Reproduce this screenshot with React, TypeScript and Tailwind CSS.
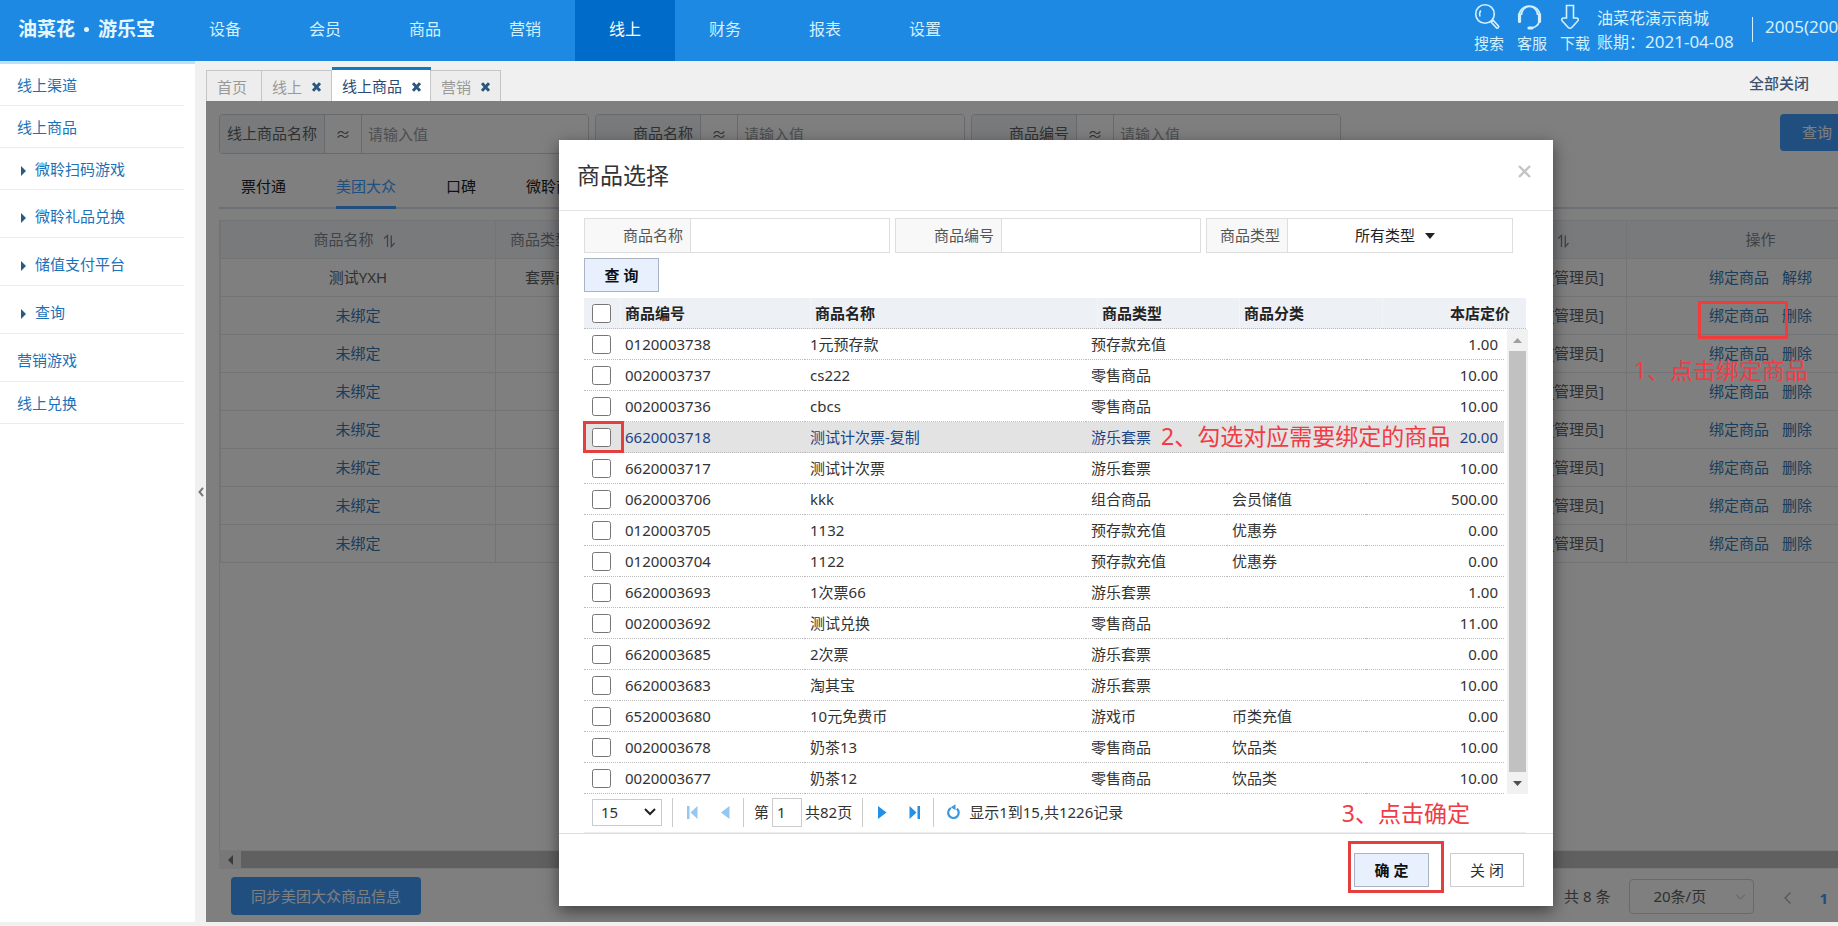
import { useState } from "react";
import type { ReactNode } from "react";

const NAV = ["设备", "会员", "商品", "营销", "线上", "财务", "报表", "设置"];

const SIDE = [
  { text: "线上渠道" },
  { text: "线上商品" },
  { text: "微聆扫码游戏", sub: true },
  { text: "微聆礼品兑换", sub: true, tall: true },
  { text: "储值支付平台", sub: true, tall: true },
  { text: "查询", sub: true, tall: true },
  { text: "营销游戏", tall: true },
  { text: "线上兑换" },
];

const TABS = [
  { text: "首页" },
  { text: "线上", closable: true },
  { text: "线上商品", closable: true, active: true },
  { text: "营销", closable: true },
];

const GOODS = [
  ["0120003738", "1元预存款", "预存款充值", "", "1.00"],
  ["0020003737", "cs222", "零售商品", "", "10.00"],
  ["0020003736", "cbcs", "零售商品", "", "10.00"],
  ["6620003718", "测试计次票-复制", "游乐套票", "", "20.00"],
  ["6620003717", "测试计次票", "游乐套票", "", "10.00"],
  ["0620003706", "kkk", "组合商品", "会员储值", "500.00"],
  ["0120003705", "1132", "预存款充值", "优惠券", "0.00"],
  ["0120003704", "1122", "预存款充值", "优惠券", "0.00"],
  ["6620003693", "1次票66", "游乐套票", "", "1.00"],
  ["0020003692", "测试兑换", "零售商品", "", "11.00"],
  ["6620003685", "2次票", "游乐套票", "", "0.00"],
  ["6620003683", "淘其宝", "游乐套票", "", "10.00"],
  ["6520003680", "10元免费币", "游戏币", "币类充值", "0.00"],
  ["0020003678", "奶茶13", "零售商品", "饮品类", "10.00"],
  ["0020003677", "奶茶12", "零售商品", "饮品类", "10.00"],
];

function SortIcon() {
  return (
    <svg width="13" height="16" viewBox="0 0 13 16" fill="none" stroke="currentColor" className="shrink-0">
      <path d="M1 6.500 4.500 3.500V15" strokeWidth="1.300" />
      <path d="M8.300 3.500V14.600L11.500 11" strokeWidth="1.300" />
    </svg>
  );
}

function CloseMark() {
  return (
    <svg width="9" height="10" viewBox="0 0 9 10" stroke="#2b577e" strokeWidth="3" className="shrink-0">
      <path d="M1 1.2 8 8.8M8 1.2 1 8.8" />
    </svg>
  );
}

function Tool({ label, children }: { label: string; children: ReactNode }) {
  return (
    <a href="#" className="flex w-[30px] flex-col items-center gap-px text-[15px] leading-5">
      <svg width="30" height="30" viewBox="0 0 30 30" fill="none" stroke="currentColor" strokeWidth="1.6">
        {children}
      </svg>
      {label}
    </a>
  );
}

function Header() {
  return (
    <header className="flex h-[61px] shrink-0 overflow-hidden bg-[#1e89e3] text-[#d3f0ff]">
      <div className="flex w-[175px] shrink-0 items-center gap-[9px] pb-[3px] pl-[18px] text-[19px] font-bold whitespace-nowrap text-[#e4f7ff]">
        <span>油菜花</span>
        <span className="h-[5px] w-[5px] rounded-full bg-[#e4f7ff]" />
        <span>游乐宝</span>
      </div>
      <nav className="flex">
        {NAV.map((n) => (
          <a
            key={n}
            href="#"
            className={
              n === "线上"
                ? "flex w-[100px] items-center justify-center bg-[#006bc9] pb-[3px] text-base text-white"
                : "flex w-[100px] items-center justify-center pb-[3px] text-base"
            }
          >
            {n}
          </a>
        ))}
      </nav>
      <div className="ml-auto flex shrink-0">
        <div className="flex gap-[13px] pt-[2px]">
          <Tool label="搜索">
            <circle cx="11" cy="12" r="9.300" />
            <path d="M6.200 14.500a6 6 0 0 1 .6-6" />
            <path d="m17.300 20.200 2-1.800 5.200 5.600c.8 1-.9 2.800-2 1.900z" />
          </Tool>
          <Tool label="客服">
            <path d="M2 14a10.500 10 0 0 1 21 0" />
            <path d="M4.500 13a8 8.500 0 0 1 16 0" />
            <path d="M2.500 12.500v7M22.500 12.500v7" strokeWidth="3.200" strokeLinecap="round" />
            <path d="M22 20c-.5 3-4 5.500-7 5.700" />
            <path d="M12 26h3" strokeWidth="3.200" strokeLinecap="round" />
          </Tool>
          <Tool label="下载">
            <path d="M6.500 3.500h7V16H16c2.500 0 3 1.600 1.500 3.200l-5.500 6c-1.300 1.400-2.700 1.400-4 0l-5.500-6C1 17.600 1.500 16 4 16h2.500z" />
          </Tool>
        </div>
        <div className="ml-[7px] w-[155px] pt-[7px] text-base leading-[23px] whitespace-nowrap">
          <p>油菜花演示商城</p>
          <p>
            账期：<span className="text-[17px]">2021-04-08</span>
          </p>
        </div>
        <div className="mt-[17px] h-[25px] w-px bg-[#d3f0ff]" />
        <div className="ml-3 w-[73px] overflow-hidden pt-[15px] text-[17px] leading-6 whitespace-nowrap">2005(200</div>
      </div>
    </header>
  );
}

function Sidebar() {
  return (
    <aside className="w-[195px] shrink-0 border-t-[3px] border-[#b9e2ff] bg-white text-[15px] text-[#1b72b8]">
      <ul className="w-[184px]">
        {SIDE.map((s) => (
          <li key={s.text} className="border-b border-[#ececec]">
            <a
              href="#"
              className={`flex items-center ${s.tall ? "h-[47px] pt-[5px]" : "h-[41px] pt-px"} ${s.sub ? "gap-[9px] pl-[21px]" : "pl-[17px]"}`}
            >
              {s.sub && (
                <svg width="5" height="10" viewBox="0 0 5 10" fill="#285a82" className="mt-1">
                  <path d="M0 0l5 5-5 5z" />
                </svg>
              )}
              {s.text}
            </a>
          </li>
        ))}
      </ul>
    </aside>
  );
}

function Filter({ label }: { label: string }) {
  return (
    <label className="flex h-10 w-[370px] shrink-0 overflow-hidden rounded border border-[#cfd2d8] text-[15px] text-[#606266]">
      <span className="flex w-[105px] shrink-0 items-center justify-end border-r border-[#cfd2d8] bg-[#f3f5f8] pr-[7px] pb-px">
        {label}
      </span>
      <span className="flex w-[37px] shrink-0 items-center justify-center border-r border-[#cfd2d8]">≈</span>
      <input placeholder="请输入值" className="min-w-0 flex-1 bg-white px-[6px] outline-none placeholder:text-[#9a9da3]" />
    </label>
  );
}

function GoodsTable() {
  const cell = "border border-[#e6e8ed]";
  return (
    <table className="w-[calc(100%+57px)] table-fixed border-collapse text-[15px] whitespace-nowrap text-[#606266]">
      <colgroup>
        <col className="w-[275px]" />
        <col className="w-[113px]" />
        <col />
        <col className="w-[268px]" />
      </colgroup>
      <thead>
        <tr className="h-[38px] bg-[#f2f5f9] text-[#82858a]">
          <th className={`${cell} pr-[7px] font-normal`}>
            <span className="flex items-center justify-center gap-[9px]">
              商品名称 <SortIcon />
            </span>
          </th>
          <th className={`${cell} pl-[14px] font-normal`}>
            <span className="flex items-center gap-[9px]">
              商品类型 <SortIcon />
            </span>
          </th>
          <th className={`${cell} pr-[56px] font-normal`}>
            <span className="flex items-center justify-end">
              <SortIcon />
            </span>
          </th>
          <th className={`${cell} font-normal`}>操作</th>
        </tr>
      </thead>
      <tbody>
        {[0, 1, 2, 3, 4, 5, 6, 7].map((i) => (
          <tr key={i} className="h-[38px]">
            <td className={`${cell} text-center ${i ? "text-[#337ab7]" : ""}`}>{i ? "未绑定" : "测试YXH"}</td>
            <td className={`${cell} pl-[29px]`}>{i ? "" : "套票商品"}</td>
            <td className={`${cell} pr-[22px] text-right`}>[管理员]</td>
            <td className={`${cell} text-center text-[#337ab7]`}>
              <a href="#" className="mr-[13px]">
                绑定商品
              </a>
              <a href="#">{i ? "删除" : "解绑"}</a>
            </td>
          </tr>
        ))}
      </tbody>
    </table>
  );
}

function Background() {
  return (
    <div className="flex h-full flex-col overflow-hidden bg-white pt-[13px] pl-[13px] text-[15px]">
      <div className="flex gap-[6px]">
        <Filter label="线上商品名称" />
        <Filter label="商品名称" />
        <Filter label="商品编号" />
        <button className="-mr-[16px] ml-auto flex h-[37px] w-[74px] shrink-0 items-center rounded bg-[#409eff] pl-[22px] text-white">
          查询
        </button>
      </div>
      <div className="mt-[13px] flex h-[42px] gap-[50px] border-b-2 border-[#dcdfe6] pl-[22px] text-[#202226]">
        <a href="#" className="pt-[8px]">票付通</a>
        <a href="#" className="-mb-[2px] border-b-[3px] border-[#409eff] pt-[8px] text-[#409eff]">美团大众</a>
        <a href="#" className="pt-[8px]">口碑</a>
        <a href="#" className="pt-[8px]">微聆商城</a>
      </div>
      <div className="mt-[11px] flex-1 border-l border-[#e6e8ed]">
        <GoodsTable />
      </div>
      <div className="flex h-[19px] items-center bg-[#f1f1f1]">
        <span className="flex w-[22px] justify-center">
          <svg width="5" height="10" viewBox="0 0 5 10" fill="#777">
            <path d="M5 0 0 5l5 5z" />
          </svg>
        </span>
        <span className="h-[17px] flex-1 bg-[#c1c1c1]" />
      </div>
      <div className="flex h-[53px] items-start pt-2 pl-[12px] text-[#606266]">
        <button className="h-[38px] w-[190px] rounded bg-[#409eff] text-white">同步美团大众商品信息</button>
        <span className="mt-[8px] mr-[19px] ml-auto">共 8 条</span>
        <div className="mt-[2px] flex h-[35px] w-[125px] items-center rounded-sm border border-[#cfd2d8] pr-[8px]">
          <select aria-label="每页条数" className="flex-1 appearance-none pl-[23px] outline-none">
            <option>20条/页</option>
          </select>
          <svg width="9" height="6" viewBox="0 0 9 6" fill="none" stroke="#b4b8bf">
            <path d="m0 .5 4.500 4.500L9 .5" />
          </svg>
        </div>
        <button aria-label="上一页" className="mt-[15px] ml-[30px]">
          <svg width="7" height="12" viewBox="0 0 7 12" fill="none" stroke="#a6a9af" strokeWidth="1.200">
            <path d="M6.500.5 1 6l5.500 5.500" />
          </svg>
        </button>
        <a href="#" className="mt-[10px] mr-[10px] ml-[28px] font-bold text-[#409eff]">
          1
        </a>
      </div>
    </div>
  );
}

function Field({ label, narrow, children }: { label: string; narrow?: boolean; children: ReactNode }) {
  return (
    <label className="flex h-[35px] border border-[#dedede] bg-[#f8f8f8] text-[15px] text-[#555]">
      <span className={`flex items-center justify-end border-r border-[#dedede] pr-[7px] pb-px ${narrow ? "w-[81px]" : "w-[106px]"}`}>
        {label}
      </span>
      {children}
    </label>
  );
}

const Sep = () => <span className="h-[29px] w-px bg-[#ccc]" />;

function Pager() {
  return (
    <div className="flex h-[39px] items-center border-b border-[#eee] pb-[2px] pl-2 text-[15px] whitespace-nowrap text-[#333]">
      <div className="relative flex h-[27px] w-[70px] items-center border border-[#c8ccd2]">
        <select aria-label="每页记录" className="h-full w-full appearance-none pl-[8px] outline-none">
          <option>15</option>
        </select>
        <svg width="12" height="8" viewBox="0 0 12 8" fill="none" stroke="#222" strokeWidth="2" className="pointer-events-none absolute right-[5px]">
          <path d="m1 1 5 5 5-5" />
        </svg>
      </div>
      <span className="w-[10px]" />
      <Sep />
      <button aria-label="首页" className="flex w-[38px] justify-center">
        <svg width="12" height="13" viewBox="0 0 12 13" fill="#94c8f3">
          <path d="M1 0h2.500v13H1zM11.500 0v13L4.500 6.500z" />
        </svg>
      </button>
      <button aria-label="上一页" className="flex w-[32px] pl-[10px]">
        <svg width="9" height="13" viewBox="0 0 9 13" fill="#94c8f3">
          <path d="M8.500 0v13L0 6.500z" />
        </svg>
      </button>
      <Sep />
      <label className="flex items-center pl-[10px]">
        第
        <input defaultValue="1" className="mr-[3px] ml-[3px] h-[29px] w-[30px] border border-[#ccc] pl-[4px] outline-none" />
        共82页
      </label>
      <span className="w-[10px]" />
      <Sep />
      <button aria-label="下一页" className="flex w-[38px] pl-[15px]">
        <svg width="9" height="13" viewBox="0 0 9 13" fill="#2090e8">
          <path d="M0 0v13l8.500-6.500z" />
        </svg>
      </button>
      <button aria-label="末页" className="flex w-[32px] pl-[8px]">
        <svg width="12" height="13" viewBox="0 0 12 13" fill="#2090e8">
          <path d="M8.500 0H11v13H8.500zM.5 0v13l7-6.500z" />
        </svg>
      </button>
      <Sep />
      <button aria-label="刷新" className="ml-[12px]">
        <svg width="15" height="16" viewBox="0 0 15 16" fill="none" stroke="#3c98e0" strokeWidth="2.200">
          <path d="M10.800 4.600a5.300 5.300 0 1 1-5.800-.6" />
          <path d="M4.800 3.200 9.500.2v6z" fill="#3c98e0" stroke="none" />
        </svg>
      </button>
      <span className="ml-[8px]">显示1到15,共1226记录</span>
    </div>
  );
}

function PickerTable() {
  const line = "border-b border-dotted border-[#bbb]";
  const [all, setAll] = useState(false);
  return (
    <div className="text-[15px] leading-5 whitespace-nowrap text-[#333]">
      <table className="w-full table-fixed border-separate border-spacing-0 bg-[#edf0f5]">
        <colgroup>
          <col className="w-9" />
          <col className="w-[190px]" />
          <col />
          <col className="w-[142px]" />
          <col className="w-[143px]" />
          <col className="w-[144px]" />
        </colgroup>
        <thead>
          <tr className="h-[31px] text-left text-[#222]">
            <th className={`${line} pl-2`}>
              <input
                type="checkbox"
                aria-label="全选"
                checked={all}
                onChange={(e) => setAll(e.target.checked)}
                className="block h-[19px] w-[19px]"
              />
            </th>
            <th className={`${line} border-l border-l-[#f8fafc] pl-1 font-semibold`}>商品编号</th>
            <th className={`${line} border-l border-l-[#f8fafc] pl-1 font-semibold`}>商品名称</th>
            <th className={`${line} border-l border-l-[#f8fafc] pl-1 font-semibold`}>商品类型</th>
            <th className={`${line} border-l border-l-[#f8fafc] pl-1 font-semibold`}>商品分类</th>
            <th className={`${line} border-l border-l-[#f8fafc] pr-4 text-right font-semibold`}>本店定价</th>
          </tr>
        </thead>
      </table>
      <div className="-mr-[2px] flex">
        <table className="min-w-0 flex-1 table-fixed border-separate border-spacing-0">
          <colgroup>
            <col className="w-9" />
            <col className="w-[185px]" />
            <col />
            <col className="w-[141px]" />
            <col className="w-[139px]" />
            <col className="w-[138px]" />
          </colgroup>
          <tbody>
            {GOODS.map((g) => {
              const on = g[0] === "6620003718";
              return (
                <tr key={g[0]} className={on ? "h-[31px] bg-[#e3e3e3] text-[#1c4587]" : "h-[31px]"}>
                  <td className={`${line} relative pl-2`}>
                    <input type="checkbox" aria-label={g[1]} defaultChecked={all} className="block h-[19px] w-[19px]" />
                    {on && <span className="pointer-events-none absolute -inset-y-px -left-px w-[41px] border-[3px] border-[#e53e3e]" />}
                  </td>
                  <td className={`${line} pl-[5px]`}>{g[0]}</td>
                  <td className={`${line} pl-[5px]`}>{g[1]}</td>
                  <td className={`${line} relative pl-[5px]`}>
                    {g[2]}
                    {on && (
                      <span className="pointer-events-none absolute -top-px left-[75px] text-[23px] leading-[30px] text-[#f03c46]">
                        2、勾选对应需要绑定的商品
                      </span>
                    )}
                  </td>
                  <td className={`${line} pl-[5px]`}>{g[3]}</td>
                  <td className={`${line} pr-[6px] text-right`}>{g[4]}</td>
                </tr>
              );
            })}
          </tbody>
        </table>
        <div className="ml-[3px] flex w-[21px] flex-col items-center bg-[#f1f1f1]">
          <span className="flex h-[22px] items-center">
            <svg width="9" height="5" viewBox="0 0 9 5" fill="#a0a0a0">
              <path d="M0 5 4.500 0 9 5z" />
            </svg>
          </span>
          <span className="w-[17px] flex-1 bg-[#c1c1c1]" />
          <span className="flex h-[22px] items-center">
            <svg width="9" height="5" viewBox="0 0 9 5" fill="#505050">
              <path d="M0 0 4.500 5 9 0z" />
            </svg>
          </span>
        </div>
      </div>
    </div>
  );
}

function Modal() {
  return (
    <div role="dialog" aria-label="商品选择" className="w-[994px] bg-white shadow-[0_5px_15px_rgba(0,0,0,0.5)]">
      <div className="flex h-[71px] items-center justify-between border-b border-[#e3e3e3] pr-[21px] pl-[18px]">
        <h2 className="text-[23px] text-[#333]">商品选择</h2>
        <button aria-label="关闭窗口" className="mb-[8px]">
          <svg width="15" height="13" viewBox="0 0 15 13" fill="none" stroke="#c4c4c4" strokeWidth="2.400">
            <path d="m2 1 11 11M13 1 2 12" />
          </svg>
        </button>
      </div>
      <div className="pt-[7px] pr-[27px] pl-[25px]">
        <div className="flex gap-[5px]">
          <Field label="商品名称">
            <input className="w-[198px] bg-white px-2 outline-none" />
          </Field>
          <Field label="商品编号">
            <input className="w-[198px] bg-white px-2 outline-none" />
          </Field>
          <Field label="商品类型" narrow>
            <span className="relative flex items-center">
              <select className="h-full w-[224px] appearance-none bg-white pl-[67px] text-[#222] outline-none">
                <option>所有类型</option>
              </select>
              <svg width="10" height="6" viewBox="0 0 10 6" fill="#222" className="pointer-events-none absolute left-[137px]">
                <path d="M0 0h10L5 6z" />
              </svg>
            </span>
          </Field>
        </div>
        <button className="mt-[5px] mb-[6px] block h-[34px] w-[75px] border border-[#a9b4c2] bg-[#e8f0fd] text-[15px] font-semibold text-[#111]">
          查 询
        </button>
        <PickerTable />
        <Pager />
      </div>
      <div className="relative flex items-center justify-end gap-[21px] border-t border-[#ddd] py-[19px] pr-[29px] text-[15px]">
        <span className="pointer-events-none absolute -top-[38px] right-[83px] text-[23px] leading-[34px] text-[#f03c46]">3、点击确定</span>
        <button className="relative h-[34px] w-[75px] border border-[#a9b4c2] bg-[#e8f0fd] font-semibold text-[#111]">
          确 定
          <span className="pointer-events-none absolute -top-[13px] -right-[16px] -bottom-[7px] -left-[7px] border-[3px] border-[#e53e3e]" />
        </button>
        <button className="h-[34px] w-[74px] border border-[#ccc] bg-white text-[#333]">关 闭</button>
      </div>
    </div>
  );
}

function TabBar() {
  return (
    <div className="flex h-10 shrink-0 items-end text-[15px]">
      {TABS.map((t) => (
        <div
          key={t.text}
          className={
            t.active
              ? "flex h-[34px] items-center gap-[10px] border-t-[3px] border-[#117abf] bg-white px-[10px] pt-[2px] text-[#2c4a72]"
              : "flex h-[31px] min-w-[56px] items-center gap-[10px] border border-b-0 border-[#c5c5c5] bg-[#ededed] px-[10px] pt-[2px] text-[#999] not-first:-ml-px"
          }
        >
          <a href="#">{t.text}</a>
          {t.closable && (
            <button aria-label={`关闭${t.text}`}>
              <CloseMark />
            </button>
          )}
        </div>
      ))}
      <a href="#" className="mr-[29px] mb-[7px] ml-auto font-medium text-[#3d5170]">
        全部关闭
      </a>
    </div>
  );
}

export default function App() {
  return (
    <div className="flex min-h-screen flex-col overflow-hidden bg-[#f0f0f0] font-['Noto_Sans','Noto_Sans_CJK_SC',sans-serif]">
      <Header />
      <div className="flex flex-1">
        <Sidebar />
        <button aria-label="收起侧栏" className="flex w-[11px] shrink-0 items-center justify-center">
          <svg width="6" height="10" viewBox="0 0 6 10" fill="none" stroke="#777" strokeWidth="2">
            <path d="M5 .8 1.500 5 5 9.200" />
          </svg>
        </button>
        <main className="flex min-w-0 flex-1 flex-col">
          <TabBar />
          <section className="relative flex-1">
            <Background />
            <div className="absolute inset-0 flex items-start justify-center overflow-hidden bg-black/50 pt-[39px] pl-[68px]">
              <Modal />
            </div>
            <span className="pointer-events-none absolute top-[200px] right-[50px] h-[38px] w-[90px] border-[3px] border-[#f03c3c]" />
            <span className="pointer-events-none absolute top-[252px] right-[30px] text-[23px] leading-[34px] whitespace-nowrap text-[#f03c46]">
              1、点击绑定商品
            </span>
          </section>
        </main>
      </div>
      <div className="h-1 shrink-0" />
    </div>
  );
}
